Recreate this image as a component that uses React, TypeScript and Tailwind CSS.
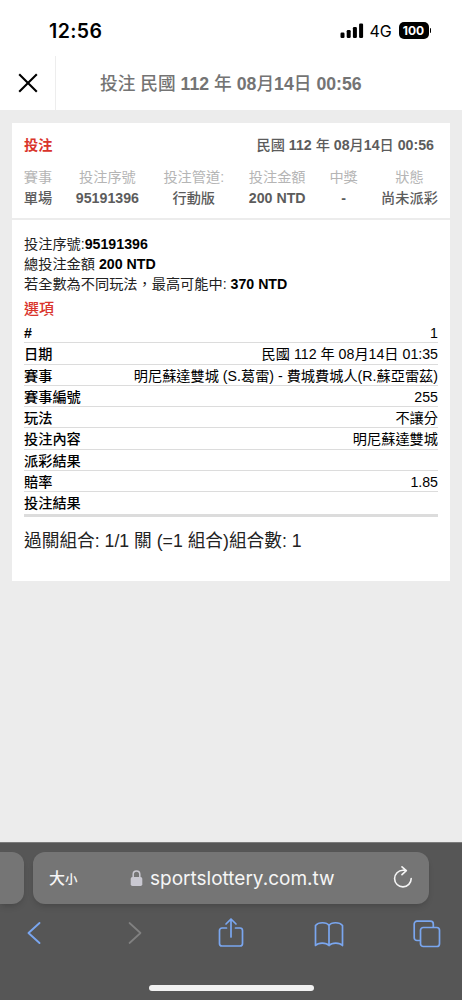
import { ReactNode } from "react";

const summary = [
    { label: "賽事", value: "單場", width: "w-[28px]" },
    { label: "投注序號", value: "95191396", width: "w-[64px]" },
    { label: "投注管道:", value: "行動版", width: "w-[62px]" },
    { label: "投注金額", value: "200 NTD", width: "w-[58px]" },
    { label: "中獎", value: "-", width: "w-[28px]" },
    { label: "狀態", value: "尚未派彩", width: "w-[57px]" },
];

const details = [
    { label: "#", value: "1" },
    { label: "日期", value: "民國 112 年 08月14日 01:35" },
    { label: "賽事", value: "明尼蘇達雙城 (S.葛雷) - 費城費城人(R.蘇亞雷茲)" },
    { label: "賽事編號", value: "255" },
    { label: "玩法", value: "不讓分" },
    { label: "投注內容", value: "明尼蘇達雙城" },
    { label: "派彩結果", value: "" },
    { label: "賠率", value: "1.85" },
    { label: "投注結果", value: "" },
];

// bold latin and digits, medium weight for the chinese characters
function Strong(props: { text: string }) {
    return (
        <span className="font-bold">
            {props.text.split(/([\u4e00-\u9fff]+)/).map((part, i) =>
                i % 2 === 1 ? <span key={i} className="font-medium">{part}</span> : part
            )}
        </span>
    );
}

function StatusBar() {
    return (
        <div className="h-[56px] flex items-start pl-[49px] pr-[31px] font-['Inter',sans-serif] text-black">
            <div className="mt-[19px] text-[19.5px] leading-[24px] font-semibold tracking-[0.02em]">12:56</div>
            <svg className="ml-auto mt-[23px]" width="24" height="16" viewBox="0 0 24 16">
                <rect x="0.5" y="9.5" width="4" height="5.5" rx="1.2" />
                <rect x="6.7" y="7" width="4" height="8" rx="1.2" />
                <rect x="12.9" y="4" width="4" height="11" rx="1.2" />
                <rect x="19.1" y="0.5" width="4" height="14.5" rx="1.2" />
            </svg>
            <div className="ml-[6px] mt-[19px] w-[23px] text-[16px] leading-[24px]">4G</div>
            <div className="ml-[6px] mt-[22px] h-[17px] w-[30px] rounded-[5px] bg-black text-white text-[12px] leading-[17px] text-center font-bold">100</div>
            <div className="ml-px mt-[28px] h-[5px] w-[1.5px] rounded-r bg-black" />
        </div>
    );
}

function Header() {
    return (
        <div className="h-[54px] flex items-stretch">
            <div className="w-[56px] border-r border-[#ededed] flex items-center justify-center">
                <svg width="20" height="20" viewBox="0 0 20 20" fill="none" stroke="#000" strokeWidth="2.1">
                    <path d="M1.2 1.2 18.800 18.800M18.800 1.200 1.200 18.800" />
                </svg>
            </div>
            <div className="flex-1 pl-[44px] leading-[56px] text-[17.7px] text-[#747474] whitespace-nowrap">
                <Strong text="投注 民國 112 年 08月14日 00:56" />
            </div>
        </div>
    );
}

function Line(props: { children: ReactNode }) {
    return <div className="h-[20px] leading-[20px] whitespace-nowrap">{props.children}</div>;
}

function Ticket() {
    return (
        <div className="mx-[12px] mt-[13px] h-[458px] bg-white text-[14.2px]">
            <div className="h-[97px] px-[12px] border-b-2 border-[#ececec] text-[#5c5c5c]">
                <div className="flex justify-between pt-[12px] pr-[4px] leading-[20px]">
                    <span className="font-bold text-[#d9342b]">投注</span>
                    <Strong text="民國 112 年 08月14日 00:56" />
                </div>
                {/* bet summary columns */}
                <div className="mt-[12px] flex justify-between text-center leading-[20px] whitespace-nowrap">
                    {summary.map((s) => (
                        <div key={s.label} className={`${s.width} flex flex-col items-center`}>
                            <div className="text-[#b5b5b5]">{s.label}</div>
                            <div className="mt-px"><Strong text={s.value} /></div>
                        </div>
                    ))}
                </div>
            </div>
            <div className="px-[12px] pt-[14px] text-[#222]">
                <Line>投注序號:<b className="text-black">95191396</b></Line>
                <Line>總投注金額 <b className="text-black">200 NTD</b></Line>
                <Line>若全數為不同玩法，最高可能中: <b className="text-black">370 NTD</b></Line>
                <div className="mt-[3px] h-[25px] leading-[24px] text-[15px] font-medium text-[#d9342b]">選項</div>
                <div className="border-b-[3px] border-[#dcdcdc]">
                    {details.map((d) => (
                        <div key={d.label} className="h-[21.3px] border-b border-[#dcdcdc] flex justify-between leading-[22px] whitespace-nowrap text-black last:border-b-0">
                            <Strong text={d.label} />
                            <span>{d.value}</span>
                        </div>
                    ))}
                </div>
                <div className="mt-[11px] leading-[26px] text-[17.7px] whitespace-nowrap">過關組合: 1/1 關 (=1 組合)組合數: 1</div>
            </div>
        </div>
    );
}

function BrowserBar() {
    return (
        <div className="h-[158px] bg-[#565656] border-t border-[#7b7b7b]">
            <div className="pt-[9px] flex">
                <div className="h-[52px] w-[24px] rounded-r-[12px] bg-[#757575] shadow-md" />
                <div className="ml-[9px] h-[52px] w-[396px] rounded-[12px] bg-[#757575] shadow-md flex items-center text-[#f5f5f5]">
                    <div className="ml-[16px] w-[81px] pt-[2px] flex items-baseline font-medium">
                        <span className="text-[16px]">大</span>
                        <span className="text-[12.5px]">小</span>
                    </div>
                    <svg className="shrink-0" width="13" height="17" viewBox="0 0 13 17" fill="none">
                        <rect x="0.7" y="7" width="11.6" height="9" rx="1.8" fill="#c9c8d1" />
                        <path d="M3.2 8V4.3a3.3 3.3 0 0 1 6.600 0V8" stroke="#c9c8d1" strokeWidth="1.5" />
                    </svg>
                    <div className="ml-[7px] pt-[2px] text-[19px] font-['Inter',sans-serif]">sportslottery.com.tw</div>
                    <svg className="ml-auto mr-[16px]" width="20" height="24" viewBox="0 0 20 24" fill="none" stroke="#f5f5f5" strokeWidth="1.6" strokeLinecap="round" strokeLinejoin="round">
                        <path d="M18.2 12.5a8.3 8.3 0 1 1-8.300-8.200h3.200M9 .9l4.300 3.800L9 8.700" />
                    </svg>
                </div>
            </div>
            <div className="h-[58px] flex items-center">
                <div className="w-[84px] flex justify-center pr-[16px]">
                    <svg width="14" height="24" viewBox="0 0 14 24" fill="none" stroke="#7aa6ef" strokeWidth="1.9" strokeLinecap="round" strokeLinejoin="round">
                        <path d="M12.5 2 1.500 12l11 10" />
                    </svg>
                </div>
                <div className="w-[102px] flex justify-center">
                    <svg width="14" height="24" viewBox="0 0 14 24" fill="none" stroke="#818181" strokeWidth="1.7" strokeLinecap="round" strokeLinejoin="round">
                        <path d="m1.5 2 11 10-11 10" />
                    </svg>
                </div>
                <div className="w-[90px] flex justify-center">
                    <svg width="26" height="32" viewBox="0 0 26 32" fill="none" stroke="#7aa6ef" strokeWidth="1.7" strokeLinecap="round" strokeLinejoin="round">
                        <path d="M8.5 11H4a2.500 2.500 0 0 0-2.500 2.500v13A2.500 2.500 0 0 0 4 29h18a2.500 2.500 0 0 0 2.500-2.500v-13A2.500 2.500 0 0 0 22 11h-4.500M13 20V2M8 7l5-5 5 5" />
                    </svg>
                </div>
                <div className="w-[105px] flex justify-center">
                    <svg className="mt-px" width="30" height="26" viewBox="0 0 30 26" fill="none" stroke="#7aa6ef" strokeWidth="1.7" strokeLinejoin="round">
                        <path d="M15 4.5C12.500 .8 4.500 .8 1.500 4.500v20c3-3.300 10.500-3.300 13.500 0 3-3.300 10.500-3.300 13.500 0v-20C25.500 .8 17.500 .8 15 4.500zM15 4.500v20" />
                    </svg>
                </div>
                <div className="w-[81px] flex justify-center pl-[10px]">
                    <svg className="mt-px" width="28" height="28" viewBox="0 0 28 28" fill="none" stroke="#7aa6ef" strokeWidth="1.7" strokeLinejoin="round">
                        <rect x="7.5" y="7.5" width="19" height="19" rx="2.8" />
                        <path d="M7.500 20.500H4a2.800 2.800 0 0 1-2.800-2.800V4A2.800 2.800 0 0 1 4 1.200h13.500A2.800 2.800 0 0 1 20.300 4v3.500" />
                    </svg>
                </div>
            </div>
            <div className="mx-auto mt-[23px] h-[6px] w-[165px] rounded-full bg-[#f1f1f1]" />
        </div>
    );
}

export default function App() {
    return (
        <div className="h-[1000px] w-[462px] overflow-hidden flex flex-col bg-[#ececec] font-['Liberation_Sans','Noto_Sans_CJK_TC',sans-serif]">
            <div className="bg-white">
                <StatusBar />
                <Header />
            </div>
            <div className="flex-1">
                <Ticket />
            </div>
            <BrowserBar />
        </div>
    );
}
